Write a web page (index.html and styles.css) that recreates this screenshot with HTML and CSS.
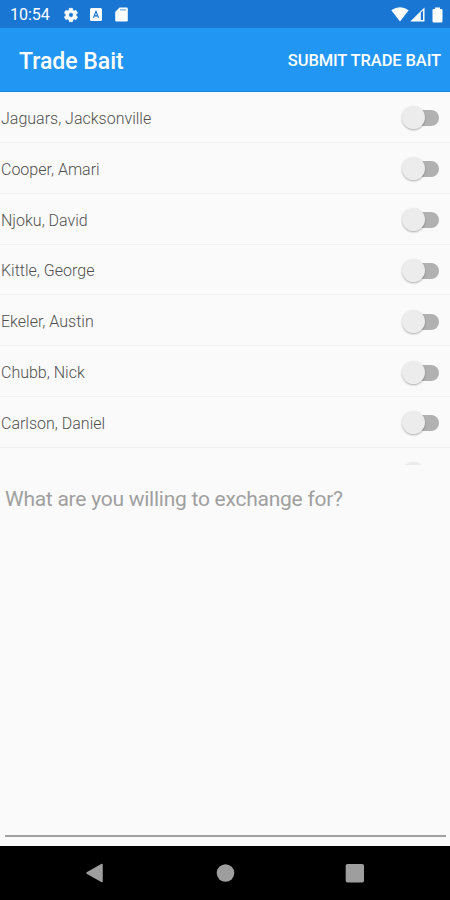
FILE: index.html
```html
<!DOCTYPE html>
<html lang="en">
<head>
<meta charset="utf-8">
<title>Trade Bait</title>
<link rel="stylesheet" href="styles.css">
</head>
<body>
<div class="screen">
  <div class="status">
    <span class="clock">10:54</span>
    <svg class="gear" width="16" height="16" viewBox="0 0 24 24"><path fill="#fff" stroke="#fff" fill-rule="evenodd" d="M19.4 13a7.500 7.500 0 0 0 0-2l2.100-1.600a.5.5 0 0 0 .1-.6l-2-3.500a.5.500 0 0 0-.6-.2l-2.500 1a7.300 7.300 0 0 0-1.700-1l-.4-2.700a.5.500 0 0 0-.5-.4h-4a.5.500 0 0 0-.5.400L9 5.100a7.700 7.700 0 0 0-1.700 1l-2.500-1a.5.500 0 0 0-.6.200l-2 3.500a.5.500 0 0 0 .1.600L4.500 11a8 8 0 0 0 0 2l-2.200 1.600a.5.500 0 0 0-.1.600l2 3.500c.1.200.4.300.6.200l2.500-1c.5.400 1.100.8 1.700 1l.4 2.700c0 .2.200.4.500.4h4c.3 0 .5-.2.500-.4l.4-2.700a7.700 7.700 0 0 0 1.700-1l2.500 1c.2.100.5 0 .6-.2l2-3.500a.5.500 0 0 0-.1-.6zM12 15.600a3.600 3.600 0 1 1 0-7.200 3.600 3.600 0 0 1 0 7.200z"/></svg>
    <svg class="abox" width="12" height="13" viewBox="0 0 12 13"><rect width="12" height="13" rx="1.500" fill="#fff"/><path d="M3.500 9.800 6 3.400l2.500 6.400M4.300 7.900h3.400" fill="none" stroke="#1976d2" stroke-width="1.200"/></svg>
    <svg class="sd" width="13" height="15" viewBox="0 0 13 15"><path fill="#fff" d="M4.500.5h7q1.300 0 1.300 1.300v11.400q0 1.300-1.300 1.300h-10Q.2 14.500.2 13.200V5z"/><path d="M5 2.800h6" stroke="#1976d2" stroke-opacity=".5" stroke-width="1.500"/></svg>
    <div class="signals">
      <svg width="18" height="15" viewBox="0 0 18 15"><path fill="#fff" d="M.3 3.300Q9-3 17.700 3.300L9 14.500z"/></svg>
      <svg width="15" height="15" viewBox="0 0 15 15"><path fill="#fff" d="M14.500.5v14H.3z"/><path fill="#1976d2" d="M10.800 5.500 13 3.400v9.500h-2.200z"/></svg>
      <svg class="battery" width="11" height="16" viewBox="0 0 11 16"><path fill="#fff" d="M3 .5h5v1.500h1.200q1.300 0 1.300 1.300v10.900q0 1.300-1.300 1.300H1.800Q.5 15.500.5 14.200V3.300q0-1.300 1.300-1.300h1.200z"/></svg>
    </div>
  </div>
  <header class="bar">
    <h1 class="title">Trade Bait</h1>
    <button class="submit">SUBMIT TRADE BAIT</button>
  </header>
  <main class="content">
    <div class="list">
      <div class="row"><span>Jaguars, Jacksonville</span><i class="switch"></i></div>
      <div class="row"><span>Cooper, Amari</span><i class="switch"></i></div>
      <div class="row"><span>Njoku, David</span><i class="switch"></i></div>
      <div class="row"><span>Kittle, George</span><i class="switch"></i></div>
      <div class="row"><span>Ekeler, Austin</span><i class="switch"></i></div>
      <div class="row"><span>Chubb, Nick</span><i class="switch"></i></div>
      <div class="row"><span>Carlson, Daniel</span><i class="switch"></i></div>
      <div class="row"><span></span><i class="switch"></i></div>
    </div>
    <div class="field">What are you willing to exchange for?</div>
  </main>
  <nav class="nav">
    <svg width="450" height="54" viewBox="0 0 450 54"><path d="M87 27 102 18.500v17z" fill="#9e9e9e" stroke="#9e9e9e" stroke-width="1.500" stroke-linejoin="round"/><circle cx="225.500" cy="27" r="8.800" fill="#9e9e9e"/><rect x="345.700" y="18" width="18.300" height="18.500" rx="1.800" fill="#9e9e9e"/></svg>
  </nav>
</div>
</body>
</html>
```
FILE: styles.css
```css
* { box-sizing: border-box; }
body { margin: 0; font-family: Roboto, sans-serif; background: #fafafa; }
.screen { width: 450px; height: 900px; display: flex; flex-direction: column; overflow: hidden; }
svg { display: block; flex: none; }
.status { height: 28px; flex: none; background: #1976d2; display: flex; align-items: center; padding: 1px 7px 0 10px; color: #fff; }
.clock { width: 52.500px; font-size: 16px; line-height: 20px; padding-top: 1px; }
.gear { margin-right: 11.500px; }
.abox { margin-right: 13px; }
.signals { display: flex; align-items: center; margin-left: auto; gap: 1px; }
.battery { margin-left: 6px; }
.bar { height: 64px; flex: none; background: #2196f3; border-bottom: 1px solid #1589ea; display: flex; align-items: center; justify-content: space-between; padding: 4px 9px 0 19px; color: #fff; }
.title { margin: 0; font-size: 23px; font-weight: 500; line-height: 30px; white-space: nowrap; }
.submit { border: 0; padding: 0 0 1px; background: none; color: #fff; font: 500 16.500px/24px Roboto, sans-serif; letter-spacing: -.1px; white-space: nowrap; }
.content { flex: 1; min-height: 0; display: flex; flex-direction: column; }
.list { height: 373px; flex: none; overflow: hidden; }
.row { height: 50.850px; display: flex; align-items: center; justify-content: space-between; padding: 3px 10px 0 1px; border-bottom: 1.500px solid #f2f2f2; color: #505050; font-size: 16px; font-weight: 300; white-space: nowrap; }
.row span:not(:empty) { box-shadow: -1px 0 0 -7px #999; }
.switch { width: 38px; height: 24px; display: flex; align-items: center; position: relative; }
.switch::before { content: ""; width: 28px; height: 16px; margin-left: 9px; border-radius: 8px; background: #b1b1b1; }
.switch::after { content: ""; position: absolute; left: 0; top: 0; width: 23px; height: 23px; border-radius: 50%; background: #ececec; box-shadow: 0 1px 2px rgba(0,0,0,.3); }
.field { flex: 1; margin: 0 4px 9px 5px; padding-top: 19px; border-bottom: 2px solid #a2a2a2; color: #a0a0a0; font-size: 21px; letter-spacing: -.25px; line-height: 30px; white-space: nowrap; }
.nav { height: 54px; flex: none; background: #000; }
```
